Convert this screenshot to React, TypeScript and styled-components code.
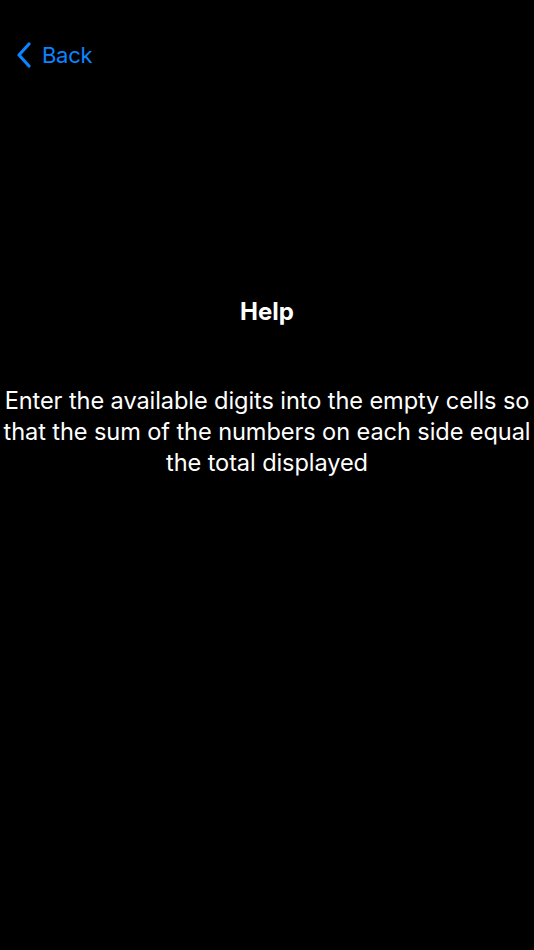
import React from 'react';
import styled, { createGlobalStyle } from 'styled-components';

const GlobalStyle = createGlobalStyle`
    html, body {
        margin: 0;
        padding: 0;
        background: #000;
    }
    body {
        font-family: Inter, "Noto Sans", "Liberation Sans", sans-serif;
        -webkit-font-smoothing: antialiased;
    }
`;

const Screen = styled.div`
    width: 534px;
    height: 950px;
    background: #000;
    display: flex;
    flex-direction: column;
`;

const NavBar = styled.div`
    height: 44px;
    margin-top: 33px;
    padding-left: 16px;
    display: flex;
    align-items: center;
`;

const BackButton = styled.button`
    display: flex;
    align-items: center;
    gap: 10px;
    background: none;
    border: none;
    padding: 0;
    color: #0a84ff;
    font-family: inherit;
    font-size: 22px;
    letter-spacing: -0.3px;
    cursor: pointer;
`;

const Content = styled.div`
    display: flex;
    flex-direction: column;
    align-items: center;
    padding-top: 220px;
`;

const Title = styled.h1`
    margin: 0;
    color: #fff;
    font-size: 24px;
    font-weight: 700;
    line-height: 30px;
`;

const Body = styled.p`
    margin: 58px 0 0;
    color: #fff;
    font-size: 23.6px;
    line-height: 31px;
    text-align: center;
    letter-spacing: -0.1px;
`;

const Chevron = () => (
    <svg width="16" height="26" viewBox="0 0 16 26" fill="none">
        <path d="M13 2 L3 13 L13 24" stroke="currentColor" strokeWidth="3.2" strokeLinecap="round" strokeLinejoin="round" />
    </svg>
);

const App = () => (
    <Screen>
        <GlobalStyle />
        <NavBar>
            <BackButton>
                <Chevron />
                Back
            </BackButton>
        </NavBar>
        <Content>
            <Title>Help</Title>
            <Body>
                Enter the available digits into the empty cells so that the sum of the numbers on each side equal the total displayed
            </Body>
        </Content>
    </Screen>
);

export default App;
